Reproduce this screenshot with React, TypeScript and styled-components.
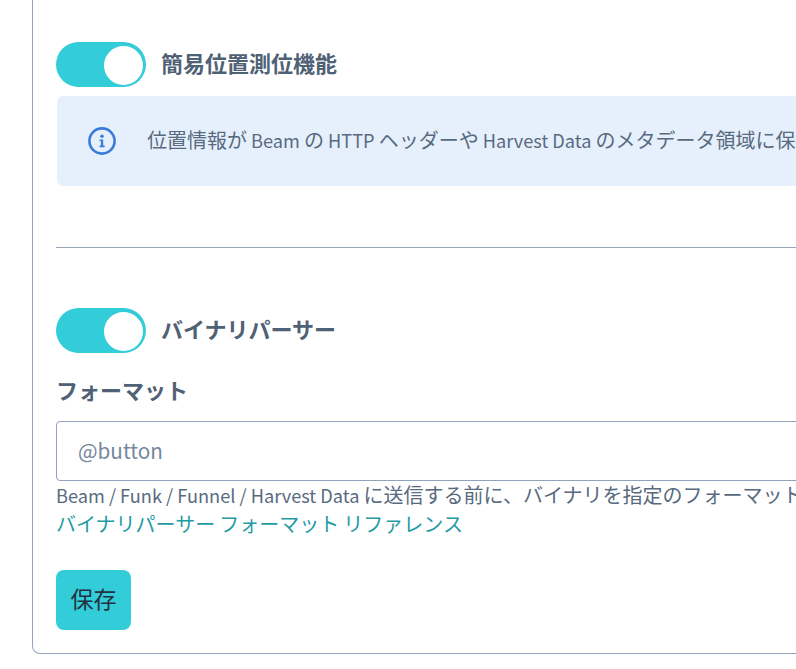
import { useState } from "react";
import styled, { createGlobalStyle } from "styled-components";

const GlobalStyle = createGlobalStyle`
  html, body {
    margin: 0;
    padding: 0;
    background: #fff;
    overflow: hidden;
  }
  body {
    font-family: "Noto Sans CJK JP", "Noto Sans", sans-serif;
    color: #4f6175;
  }
`;

const Page = styled.div`
  width: 796px;
  height: 669px;
  overflow: hidden;
  box-sizing: border-box;
  padding: 0 0 15px 32px;
  display: flex;
  flex-direction: column;
  justify-content: flex-end;
`;

const Card = styled.div`
  width: 1100px;
  box-sizing: border-box;
  border: 1px solid #8fa3bd;
  border-top: none;
  border-radius: 0 0 8px 8px;
  padding: 42px 23px 23px;
`;

const ToggleRow = styled.div`
  display: flex;
  align-items: center;
  gap: 15px;
  height: 45px;
`;

const Toggle = styled.button<{ $on: boolean }>`
  position: relative;
  width: 90px;
  height: 45px;
  padding: 0;
  border: none;
  border-radius: 23px;
  background: ${(p) => (p.$on ? "#33ccd9" : "#c5ced9")};
  cursor: pointer;

  &::after {
    content: "";
    position: absolute;
    top: 4px;
    left: ${(p) => (p.$on ? "48px" : "3px")};
    width: 39px;
    height: 39px;
    border-radius: 50%;
    background: #fff;
  }
`;

const ToggleLabel = styled.span`
  font-size: 22px;
  font-weight: 700;
  line-height: 41px;
  height: 45px;
  color: #4f6175;
`;

// latin words run a little smaller than the japanese around them
const Latin = styled.span`
  font-size: 18.2px;
`;

const Message = styled.div`
  margin: 9px 0 0 1px;
  height: 90px;
  display: flex;
  align-items: center;
  gap: 31px;
  padding-left: 31px;
  border-radius: 6px;
  background: #e5f0fc;
  font-size: 20px;
  white-space: nowrap;
  color: #586a80;
`;

const MessageText = styled.span`
  line-height: 29px;
  margin-top: -2px;
`;

const InfoIcon = styled.svg`
  width: 28px;
  height: 28px;
  flex: none;
`;

const Divider = styled.hr`
  margin: 61px 0 60px;
  border: none;
  border-top: 1px solid #97a6b8;
`;

const FieldLabel = styled.label`
  display: block;
  height: 32px;
  margin-top: 21px;
  font-size: 22px;
  font-weight: 700;
  line-height: 30px;
  color: #4f6175;
`;

const Input = styled.input`
  display: block;
  width: 100%;
  height: 60px;
  margin-top: 15px;
  box-sizing: border-box;
  padding: 0 21px 3px;
  border: 1px solid #8fa3bd;
  border-radius: 4px;
  outline: none;
  font-family: inherit;
  font-size: 20.7px;
  color: #4f6175;

  &::placeholder {
    color: #74879e;
    opacity: 1;
  }
`;

const Help = styled.p`
  margin: 0;
  height: 29px;
  font-size: 20px;
  line-height: 27px;
  white-space: nowrap;
  color: #586a80;
`;

const HelpLink = styled.a`
  display: block;
  height: 30px;
  font-size: 20px;
  line-height: 27px;
  color: #1f9ba6;
  text-decoration: none;
`;

const SaveButton = styled.button`
  display: block;
  width: 75px;
  height: 60px;
  margin-top: 30px;
  padding: 0 0 4px;
  border: none;
  border-radius: 8px;
  background: #33ccd9;
  font-family: inherit;
  font-size: 23px;
  color: #22313f;
  cursor: pointer;
`;

export default function App() {
  const [positioning, setPositioning] = useState(true);
  const [parser, setParser] = useState(true);

  return (
    <Page>
      <GlobalStyle />
      <Card>
        <ToggleRow>
          <Toggle $on={positioning} onClick={() => setPositioning(!positioning)} />
          <ToggleLabel>簡易位置測位機能</ToggleLabel>
        </ToggleRow>
        <Message>
          <InfoIcon viewBox="0 0 28 28">
            <circle cx="14" cy="14" r="12.6" fill="none" stroke="#3a7bd8" strokeWidth="2.6" />
            <circle cx="14" cy="9.2" r="1.7" fill="#3a7bd8" />
            <path d="M11.6 12.4h3.6v6.2h1.4v1.7h-5v-1.7h1.3v-4.5h-1.3z" fill="#3a7bd8" />
          </InfoIcon>
          <MessageText>
            位置情報が<Latin> Beam </Latin>の<Latin> HTTP </Latin>ヘッダーや<Latin> Harvest Data </Latin>のメタデータ領域に保存されます。
          </MessageText>
        </Message>
        <Divider />
        <ToggleRow>
          <Toggle $on={parser} onClick={() => setParser(!parser)} />
          <ToggleLabel>バイナリパーサー</ToggleLabel>
        </ToggleRow>
        <FieldLabel htmlFor="format">フォーマット</FieldLabel>
        <Input id="format" placeholder="@button" />
        <Help>
          <Latin>Beam / Funk / Funnel / Harvest Data </Latin>に送信する前に、バイナリを指定のフォーマットでパースします。
        </Help>
        <HelpLink href="#">
          バイナリパーサー<Latin> </Latin>フォーマット<Latin> </Latin>リファレンス
        </HelpLink>
        <SaveButton>保存</SaveButton>
      </Card>
    </Page>
  );
}
